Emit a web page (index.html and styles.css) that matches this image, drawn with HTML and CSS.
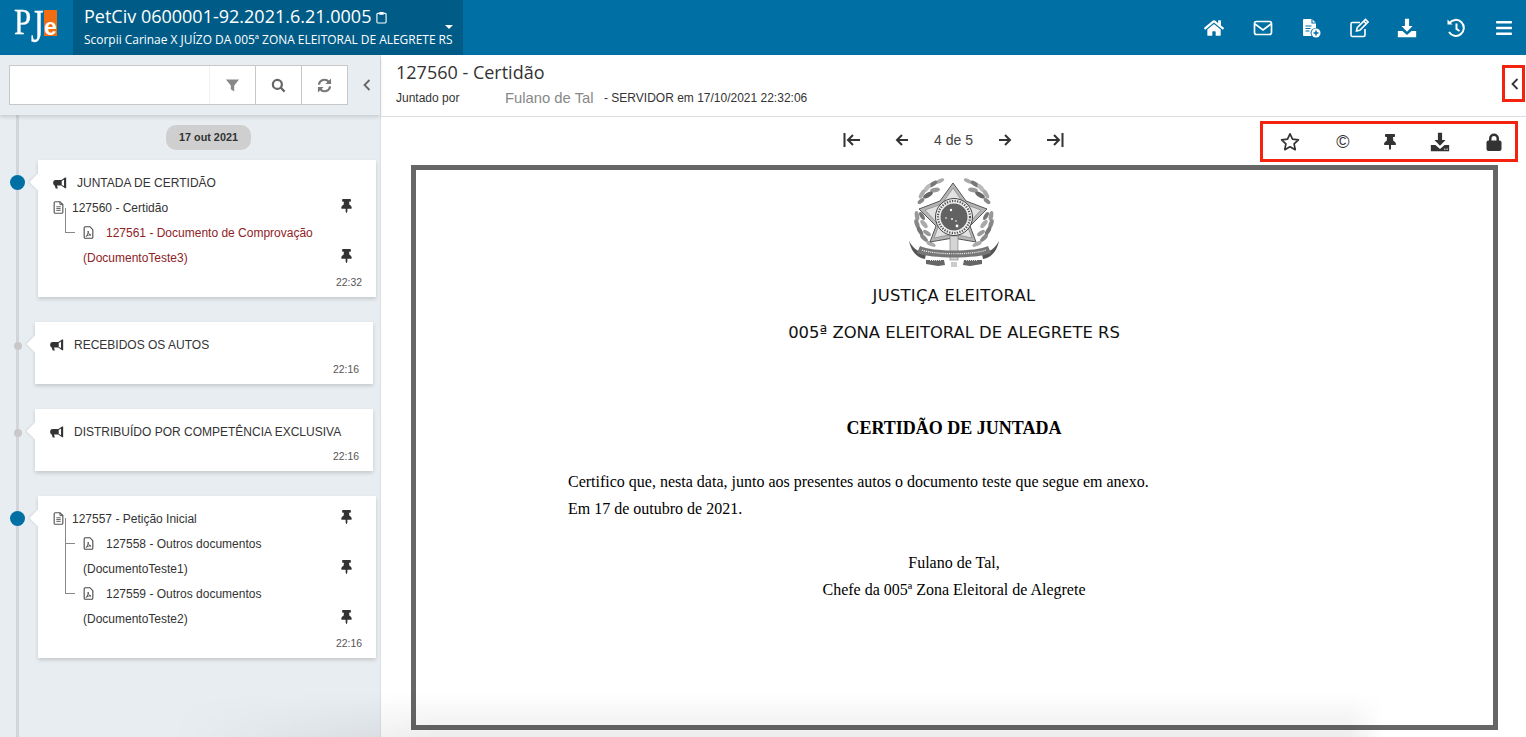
FILE: index.html
```html
<!DOCTYPE html>
<html lang="pt-BR">
<head>
<meta charset="utf-8">
<title>PJe</title>
<link rel="stylesheet" href="styles.css">
</head>
<body>
<svg class="defs" aria-hidden="true">
  <symbol id="i-pin" viewBox="0 0 384 512"><path d="M298 214L286 96h42c13 0 24-11 24-24V24c0-13-11-24-24-24H56C43 0 32 11 32 24v48c0 13 11 24 24 24h42L86 214C37 237 0 277 0 328c0 13 11 24 24 24h136v104c0 1 0 2 1 4l24 48c3 6 11 6 14 0l24-48c1-2 1-3 1-4V352h136c13 0 24-11 24-24 0-51-38-91-86-114z"/></symbol>
  <symbol id="i-down" viewBox="0 0 24 24"><path d="M9.5 1h5v8.5h4.200L12 16.400 5.300 9.500h4.200z"/><path d="M1 15.500h5.500L12 20.500l5.500-5H23V23H1z"/><rect x="17" y="20" width="1.500" height="1.300" fill="#fff"/><rect x="19.800" y="20" width="1.500" height="1.300" fill="#fff"/></symbol>
  <symbol id="i-doc" viewBox="0 0 14 18"><path d="M1 2.500A1.500 1.500 0 0 1 2.500 1H9l4 4v10.500a1.500 1.500 0 0 1-1.500 1.500h-9A1.500 1.500 0 0 1 1 15.500z" fill="none" stroke="currentColor" stroke-width="1.600"/><path d="M4 8h6M4 10.500h6M4 13h6M9 1v4h4" fill="none" stroke="currentColor" stroke-width="1.300"/></symbol>
  <symbol id="i-pdf" viewBox="0 0 14 18"><path d="M1 2.500A1.500 1.500 0 0 1 2.500 1H9l4 4v10.500a1.500 1.500 0 0 1-1.500 1.500h-9A1.500 1.500 0 0 1 1 15.500z" fill="none" stroke="currentColor" stroke-width="1.500"/><path d="M3.500 14.500C5.500 13 7 9.500 6.500 7c0 3 1.500 5 4 5.500-2.500-.3-5 .3-7 2z" fill="none" stroke="currentColor" stroke-width="1.200"/></symbol>
  <symbol id="i-horn" viewBox="0 0 16 14"><path d="M14 0.500h1.200V13H14L9.500 10H4.500L5.500 13.500H3L1.800 10C.6 9.500 0 8.200 0 6.800 0 5 1 3.500 3 3.500h6.500zM12.700 2.800L10 4.600v4.300l2.700 1.800z" fill-rule="evenodd"/></symbol>
</svg>

<div class="app">
  <header class="topbar">
    <div class="logo">
      <span class="logo-p">P</span>
      <span class="logo-j">J</span>
      <span class="logo-e">e</span>
    </div>
    <div class="case">
      <div class="case-num">PetCiv 0600001-92.2021.6.21.0005
        <svg class="clip" viewBox="0 0 12 14"><path d="M3.500 2.500H2A1 1 0 0 0 1 3.500v8.500a1 1 0 0 0 1 1h8a1 1 0 0 0 1-1V3.500a1 1 0 0 0-1-1H8.500" fill="none" stroke="#fff" stroke-width="1.200"/><rect x="3.500" y="1" width="5" height="3" rx=".6" fill="#fff"/></svg>
      </div>
      <div class="case-parts">Scorpii Carinae X JUÍZO DA 005ª ZONA ELEITORAL DE ALEGRETE RS</div>
      <span class="caret"></span>
    </div>
    <nav class="top-actions">
      <svg class="top-ic" viewBox="0 0 576 512" fill="#fff"><path d="M280 148L96 300v164a16 16 0 0 0 16 16l112 0a16 16 0 0 0 16-16v-96a16 16 0 0 1 16-16h64a16 16 0 0 1 16 16v96a16 16 0 0 0 16 16l112 0a16 16 0 0 0 16-16V300L296 148a12 12 0 0 0-16 0zM572 251l-84-69V44a12 12 0 0 0-12-12h-56a12 12 0 0 0-12 12v73L318 43a48 48 0 0 0-61 0L4 251a12 12 0 0 0-1 17l25 31a12 12 0 0 0 17 2l235-194a12 12 0 0 1 16 0l235 194a12 12 0 0 0 17-2l25-31a12 12 0 0 0-1-17z"/></svg>
      <svg class="top-ic" viewBox="0 0 20 20" fill="none" stroke="#fff" stroke-width="1.700"><rect x="1.500" y="3.500" width="17" height="13" rx="2"/><path d="M2 6l8 6 8-6"/></svg>
      <svg class="top-ic" viewBox="0 0 20 20"><path d="M3 1h8l4 4v5a5 5 0 0 0-4.500 8H3a1 1 0 0 1-1-1V2a1 1 0 0 1 1-1z" fill="#fff"/><path d="M11 1v4h4M4.500 8h6M4.500 10.500h5M4.500 13h4" stroke="#006fa3" stroke-width="1.100" fill="none"/><circle cx="15" cy="15" r="4.500" fill="#fff"/><path d="M15 12.500v5M12.500 15h5" stroke="#006fa3" stroke-width="1.500"/></svg>
      <svg class="top-ic" viewBox="0 0 20 20" fill="none" stroke="#fff" stroke-width="1.600"><path d="M16 11v6a1.500 1.500 0 0 1-1.500 1.500h-11A1.500 1.500 0 0 1 2 17V6a1.500 1.500 0 0 1 1.500-1.500H11"/><path d="M7.500 13l.7-3.300L16.500 1.500l2.500 2.500-8.200 8.300zM14.800 3.200l2.500 2.500"/></svg>
      <svg class="top-ic" viewBox="0 0 24 24" fill="#fff"><use href="#i-down"/></svg>
      <svg class="top-ic" viewBox="0 0 20 20" fill="none" stroke="#fff" stroke-width="2"><path d="M3.500 5A8 8 0 1 1 3 14"/><path d="M1.500 1.500v5h5z" fill="#fff" stroke="none"/><path d="M10.500 5.500V11l3 2"/></svg>
      <svg class="top-ic" viewBox="0 0 20 20" fill="#fff"><rect x="2" y="3" width="16" height="2.500" rx=".8"/><rect x="2" y="8.800" width="16" height="2.500" rx=".8"/><rect x="2" y="14.500" width="16" height="2.500" rx=".8"/></svg>
    </nav>
  </header>

  <div class="main">
    <aside class="sidebar">
      <div class="side-top">
        <div class="search">
          <span class="search-field"></span>
          <button class="search-btn"><svg class="ic-14" viewBox="0 0 16 16" fill="#888"><path d="M1 1.500h14L9.800 8v6.500L6.200 12V8z"/></svg></button>
          <button class="search-btn"><svg class="ic-14" viewBox="0 0 16 16" fill="none" stroke="#666" stroke-width="2.400"><circle cx="6.800" cy="6.800" r="4.800"/><path d="M10.200 10.200l4.300 4.300"/></svg></button>
          <button class="search-btn"><svg class="ic-14" viewBox="0 0 16 16" fill="none" stroke="#777" stroke-width="2.300"><path d="M2 7a6 6 0 0 1 10.500-3M14 9A6 6 0 0 1 3.500 12"/><path d="M15 .5v6H9zM1 15.500v-6h6z" fill="#777" stroke="none"/></svg></button>
        </div>
        <svg class="side-chev" viewBox="0 0 8 12" fill="none" stroke="#666" stroke-width="1.800"><path d="M6.500 1L1.500 6l5 5"/></svg>
      </div>

      <div class="timeline">
        <div class="date-pill">17 out 2021</div>

        <article class="card">
          <span class="dot dot-big"></span>
          <div class="row"><svg class="ic-horn"><use href="#i-horn"/></svg><span class="event-text">JUNTADA DE CERTIDÃO</span></div>
          <div class="row"><svg class="ic-doc"><use href="#i-doc"/></svg><span class="doc-text">127560 - Certidão</span><svg class="ic-pin"><use href="#i-pin"/></svg></div>
          <div class="row child last red"><svg class="ic-pdf"><use href="#i-pdf"/></svg><span class="child-text">127561 - Documento de Comprovação</span></div>
          <div class="row sub red"><span>(DocumentoTeste3)</span><svg class="ic-pin"><use href="#i-pin"/></svg></div>
          <div class="time">22:32</div>
        </article>

        <article class="card card-shift">
          <span class="dot"></span>
          <div class="row"><svg class="ic-horn"><use href="#i-horn"/></svg><span class="event-text">RECEBIDOS OS AUTOS</span></div>
          <div class="time">22:16</div>
        </article>

        <article class="card card-shift">
          <span class="dot"></span>
          <div class="row"><svg class="ic-horn"><use href="#i-horn"/></svg><span class="event-text">DISTRIBUÍDO POR COMPETÊNCIA EXCLUSIVA</span></div>
          <div class="time">22:16</div>
        </article>

        <article class="card">
          <span class="dot dot-big"></span>
          <div class="row"><svg class="ic-doc"><use href="#i-doc"/></svg><span class="doc-text">127557 - Petição Inicial</span><svg class="ic-pin"><use href="#i-pin"/></svg></div>
          <div class="row child"><svg class="ic-pdf"><use href="#i-pdf"/></svg><span class="child-text">127558 - Outros documentos</span></div>
          <div class="row sub trunk"><span>(DocumentoTeste1)</span><svg class="ic-pin"><use href="#i-pin"/></svg></div>
          <div class="row child last"><svg class="ic-pdf"><use href="#i-pdf"/></svg><span class="child-text">127559 - Outros documentos</span></div>
          <div class="row sub"><span>(DocumentoTeste2)</span><svg class="ic-pin"><use href="#i-pin"/></svg></div>
          <div class="time">22:16</div>
        </article>
      </div>
    </aside>

    <section class="viewer">
      <div class="viewer-head">
        <div class="viewer-info">
          <h1 class="viewer-title">127560 - Certidão</h1>
          <div class="viewer-meta"><span class="meta-label">Juntado por</span><span class="meta-name">Fulano de Tal</span><span>- SERVIDOR em 17/10/2021 22:32:06</span></div>
        </div>
        <div class="frame-chev">
          <svg class="chev-ic" viewBox="0 0 8 12" fill="none" stroke="#333" stroke-width="1.800"><path d="M6.500 1L1.500 6l5 5"/></svg>
        </div>
      </div>

      <div class="toolbar">
        <div></div>
        <div class="pager">
          <svg class="nav-ic" viewBox="0 0 18 14" fill="none" stroke="#333" stroke-width="2"><path d="M1.500 0v14M17 7H5M10 2L5 7l5 5"/></svg>
          <svg class="nav-ic" viewBox="0 0 18 14" fill="none" stroke="#333" stroke-width="2"><path d="M15 7H4M9 2L4 7l5 5"/></svg>
          <span class="pager-text">4 de 5</span>
          <svg class="nav-ic" viewBox="0 0 18 14" fill="none" stroke="#333" stroke-width="2"><path d="M3 7h11M9 2l5 5-5 5"/></svg>
          <svg class="nav-ic" viewBox="0 0 18 14" fill="none" stroke="#333" stroke-width="2"><path d="M16.500 0v14M1 7h12M8 2l5 5-5 5"/></svg>
        </div>
        <div class="frame-tools">
          <svg class="tool-ic" viewBox="0 0 20 20" fill="none" stroke="#333" stroke-width="1.700"><path d="M10 1.800l2.500 5.400 5.900.7-4.300 4 1.100 5.800L10 14.800l-5.200 2.900 1.100-5.800-4.300-4 5.900-.7z" stroke-linejoin="round"/></svg>
          <span class="copy">©</span>
          <svg class="tool-ic pin-tool" fill="#333"><use href="#i-pin"/></svg>
          <svg class="tool-ic" viewBox="0 0 24 24" fill="#333"><use href="#i-down"/></svg>
          <svg class="tool-ic" viewBox="0 0 20 20" fill="#333"><path d="M5 9V6.500a5 5 0 0 1 10 0V9h-2.500V6.500a2.500 2.500 0 0 0-5 0V9z"/><rect x="2.500" y="8.500" width="15" height="10.500" rx="2"/></svg>
        </div>
      </div>

      <div class="doc-frame">
        <svg class="emblem" viewBox="0 0 104 98">
          <defs>
            <filter id="soft"><feGaussianBlur stdDeviation=".45"/></filter>
            <g id="wreath">
              <ellipse cx="38" cy="7" rx="4.500" ry="2" transform="rotate(-25 38 7)" fill="#aaa"/>
              <ellipse cx="31" cy="10" rx="5" ry="2.200" transform="rotate(-35 31 10)" fill="#777"/>
              <ellipse cx="33" cy="16" rx="5" ry="2.200" transform="rotate(-10 33 16)" fill="#999"/>
              <ellipse cx="25" cy="14" rx="5" ry="2.200" transform="rotate(-50 25 14)" fill="#bbb"/>
              <ellipse cx="26" cy="21" rx="5.500" ry="2.400" transform="rotate(-30 26 21)" fill="#666"/>
              <ellipse cx="20" cy="20" rx="5" ry="2.200" transform="rotate(-60 20 20)" fill="#aaa"/>
              <ellipse cx="19" cy="27" rx="4" ry="2" transform="rotate(-40 19 27)" fill="#888"/>
              <ellipse cx="15" cy="42" rx="5" ry="2.200" transform="rotate(80 15 42)" fill="#999"/>
              <ellipse cx="20" cy="42" rx="4.500" ry="2" transform="rotate(60 20 42)" fill="#777"/>
              <ellipse cx="15" cy="50" rx="5" ry="2.200" transform="rotate(70 15 50)" fill="#888"/>
              <ellipse cx="22" cy="50" rx="5" ry="2.200" transform="rotate(50 22 50)" fill="#aaa"/>
              <ellipse cx="18" cy="57" rx="5" ry="2.200" transform="rotate(60 18 57)" fill="#777"/>
              <ellipse cx="25" cy="59" rx="4.500" ry="2" transform="rotate(35 25 59)" fill="#999"/>
              <ellipse cx="22" cy="64" rx="5" ry="2.200" transform="rotate(45 22 64)" fill="#888"/>
              <ellipse cx="29" cy="70" rx="5" ry="2" transform="rotate(25 29 70)" fill="#aaa"/>
              <path d="M7 67c4 7 9 11 17 13l-1 5C15 84 9 77 7 67z" fill="#555"/>
              <path d="M24 86h18l1 5-7 1-12-2z" fill="#666"/>
            </g>
          </defs>
          <g filter="url(#soft)">
            <use href="#wreath"/>
            <use href="#wreath" transform="translate(104 0) scale(-1 1)"/>
            <polygon points="51,9 64,27 85,35 68,52 74,68 51,64 28,68 34,52 17,35 38,27" fill="#b5b5b5" stroke="#555" stroke-width="1"/>
            <polygon points="51,14 62,30 79,36 65,51 70,64 51,60 32,64 37,51 23,36 40,30" fill="#e2e2e2" stroke="#777" stroke-width=".6"/>
            <rect x="48" y="62" width="8" height="24" fill="#d5d5d5" stroke="#777" stroke-width=".6"/>
            <circle cx="52" cy="43" r="18.500" fill="#f0f0f0" stroke="#444" stroke-width="1"/>
            <circle cx="52" cy="43" r="16" fill="none" stroke="#555" stroke-width="2.200" stroke-dasharray="1.300 1.300"/>
            <circle cx="52" cy="43" r="13.500" fill="#626262"/>
            <g fill="#fff"><circle cx="49" cy="36" r="1.200"/><circle cx="44" cy="44" r=".8"/><circle cx="50" cy="45" r=".9"/><circle cx="54" cy="47" r=".8"/><circle cx="55" cy="52" r="1.400"/></g>
            <path d="M18 72c12 6 56 6 68 0l3 7c-14 6-60 6-74 0z" fill="#777"/>
            <path d="M20 76c14 5 50 5 64 0" stroke="#eee" stroke-width="1.200" stroke-dasharray="1.200 .9" fill="none"/>
            <path d="M28 86.500h12M64 86.500h12" stroke="#ddd" stroke-width="1" stroke-dasharray="1 1" fill="none"/>
            <rect x="49" y="88" width="6" height="5" fill="#ccc"/>
          </g>
        </svg>
        <p class="org">JUSTIÇA ELEITORAL</p>
        <p class="org org-zone">005ª ZONA ELEITORAL DE ALEGRETE RS</p>
        <h2 class="doc-title">CERTIDÃO DE JUNTADA</h2>
        <div class="doc-body">
          <p>Certifico que, nesta data, junto aos presentes autos o documento teste que segue em anexo.</p>
          <p>Em 17 de outubro de 2021.</p>
        </div>
        <div class="doc-sign">
          <p>Fulano de Tal,</p>
          <p>Chefe da 005ª Zona Eleitoral de Alegrete</p>
        </div>
      </div>
    </section>
  </div>
  <div class="bottom-fade"></div>
</div>
</body>
</html>
```

FILE: styles.css
```css
* { box-sizing: border-box; }
html, body { height: 100%; }
body {
  margin: 0;
  font-family: "Liberation Sans", Arial, sans-serif;
  font-size: 12px;
  color: #333;
  background: #fff;
  overflow: hidden;
}
.defs { display: none; }
.app { position: relative; height: 100vh; display: flex; flex-direction: column; overflow: hidden; }

/* header */
.topbar { height: 55px; flex: none; display: flex; background: #006fa3; color: #fff; font-family: "Open Sans", sans-serif; }
.logo { width: 73px; position: relative; flex: none; }
.logo-p, .logo-j { position: absolute; font: 36px/41px "Liberation Serif", serif; color: #fff; transform-origin: 0 0; -webkit-text-stroke: .3px #fff; }
.logo-p { left: 14px; top: 2px; transform: scaleX(.86); }
.logo-j { left: 31px; top: 0; transform: scale(.9, 1.3); }
.logo-e {
  position: absolute; left: 44px; top: 10px; width: 13px; height: 26px; padding-top: 8px;
  background: #f26c12; color: #fff; text-align: center;
  font: bold 23px/18px "Liberation Sans", sans-serif;
}
.case { width: 390px; flex: none; background: #005c87; padding: 5px 0 0 11px; position: relative; }
.case-num { font-size: 18px; line-height: 22px; white-space: nowrap; display: flex; align-items: center; gap: 5px; }
.clip { width: 11px; height: 13px; margin-top: 2px; }
.case-parts { font-size: 11.950px; line-height: 17px; margin-top: 4px; white-space: nowrap; }
.caret { position: absolute; left: 372px; top: 25px; border: 4px solid transparent; border-top-color: #fff; border-bottom: 0; }
.top-actions { margin-left: auto; display: flex; align-items: center; gap: 28.300px; padding-right: 12px; }
.top-ic { width: 20px; height: 20px; display: block; }

/* layout */
.main { flex: 1; display: flex; min-height: 0; }
.sidebar { width: 381px; flex: none; background: #e8edf1; border-right: 1px solid #dcdfe2; display: flex; flex-direction: column; min-height: 0; }
.side-top { height: 60px; flex: none; display: flex; align-items: center; padding: 0 0 0 9px; box-shadow: 0 2px 4px rgba(0,0,0,.14); position: relative; }
.search { width: 339px; height: 40px; display: flex; background: #fff; border: 1px solid #c8c8c8; }
.search-field { flex: 1; border-right: 1px solid #f0f0f0; }
.search-btn { width: 46px; background: #fff; border: 0; border-left: 1px solid #c8c8c8; padding: 0; display: flex; align-items: center; justify-content: center; }
.search-btn:first-of-type { border-left: 0; width: 45px; }
.ic-14 { width: 15px; height: 15px; }
.side-chev { width: 8px; height: 12px; margin-left: 15px; }

/* timeline */
.timeline { flex: 1; margin-left: 16px; border-left: 3px solid #d2d6da; padding: 10px 0 0 19px; display: flex; flex-direction: column; align-items: flex-start; gap: 25px; }
.date-pill { margin: 0 0 -15px 128px; width: 85px; height: 25px; border-radius: 10px; background: #cfcfcf; font-weight: bold; font-size: 10.800px; line-height: 25px; text-align: center; color: #333; }
.card { position: relative; width: 338px; background: #fff; padding: 10px 14px 7px 15px; box-shadow: 0 2px 4px rgba(0,0,0,.16); }
.card::before { content: ""; position: absolute; left: -6px; top: 16px; width: 12px; height: 12px; background: #fff; transform: rotate(45deg); box-shadow: -2px 2px 2px -1px rgba(0,0,0,.08); clip-path: polygon(-30% 130%, -30% -30%, 100% 100%, 50% 130%); }
.card-shift { margin-left: -3px; }
.dot { position: absolute; left: -21px; top: 20px; width: 8px; height: 8px; border-radius: 50%; background: #c8c8c8; }
.dot-big { left: -28px; top: 15px; width: 15px; height: 15px; background: #006fa3; }
.row { position: relative; height: 25px; display: flex; align-items: center; color: #333; }
.ic-horn { width: 14px; height: 12px; fill: #333; flex: none; }
.ic-doc { width: 11px; height: 13px; color: #555; flex: none; }
.ic-pdf { width: 11px; height: 13px; color: #444; flex: none; }
.ic-pin { width: 11px; height: 14px; fill: #333; margin-left: auto; margin-right: 10px; margin-top: -3px; flex: none; }
.event-text { margin-left: 10px; }
.doc-text { margin-left: 8px; }
.child { padding-left: 30px; }
.child-text { margin-left: 12px; }
.child::before { content: ""; position: absolute; left: 12px; top: -13px; width: 9px; height: 25px; border-left: 1px solid #888; border-bottom: 1px solid #888; }
.child.last::before { top: -12px; height: 24px; }
.sub { padding-left: 30px; }
.trunk::before { content: ""; position: absolute; left: 12px; top: -13px; bottom: 0; border-left: 1px solid #888; }
.red { color: #8e2226; }
.time { height: 15px; margin-top: 5px; text-align: right; font-size: 10.400px; line-height: 15px; color: #555; }

/* viewer */
.viewer { flex: 1; min-width: 0; display: flex; flex-direction: column; }
.viewer-head { height: 62px; flex: none; display: flex; justify-content: space-between; border-bottom: 1px solid #dcdfe2; padding-left: 15px; }
.viewer-title { margin: 5px 0 0; font: 400 18px/24px "Open Sans", sans-serif; color: #333; }
.viewer-meta { margin-top: 6px; line-height: 16px; display: flex; align-items: center; }
.meta-label { width: 109px; }
.meta-name { width: 99px; font-size: 14.800px; color: #888; }
.frame-chev { width: 23px; height: 37px; margin: 10px 1px 0 0; border: 3px solid #f4230f; display: flex; align-items: center; justify-content: center; padding-left: 3px; }
.chev-ic { width: 8px; height: 12px; flex: none; }

.toolbar { height: 48px; flex: none; display: grid; grid-template-columns: 1fr auto 1fr; align-items: start; }
.pager { display: flex; align-items: center; height: 45px; }
.nav-ic { width: 18px; height: 14px; margin-top: 0; }
.nav-ic:first-child { margin-right: 32px; }
.nav-ic:nth-child(2) { margin-right: 23px; }
.nav-ic:nth-child(4) { margin-left: 23px; margin-right: 32px; }
.pager-text { font-size: 14px; line-height: 16px; color: #444; }
.frame-tools { justify-self: end; margin: 4px 8px 0 0; width: 258px; height: 41px; border: 3px solid #f4230f; display: flex; align-items: center; justify-content: space-between; padding: 0 11px 0 17px; }
.tool-ic { width: 20px; height: 20px; display: block; }
.pin-tool { width: 12px; height: 16px; }
.copy { font-size: 18px; line-height: 20px; color: #333; margin-left: 2px; }

.doc-frame { flex: 1; margin: 0 28px 7px 30px; border: 5px solid #666; background: #fff; min-height: 0; text-align: center; color: #000; font-family: "Liberation Serif", serif; padding: 4px 1px 0 0; }
.emblem { display: block; width: 104px; height: 98px; margin: 0 auto; }
.org { margin: 0; font: 16.400px/37px "DejaVu Sans", Verdana, sans-serif; color: #111; }
.org:first-of-type { margin-top: 5px; letter-spacing: .25px; }
.doc-title { margin: 64px 0 0; font: bold 18px/27px "Liberation Serif", serif; }
.doc-body { margin: 26px 0 0 152px; text-align: left; font-size: 16px; line-height: 27px; }
.doc-body p, .doc-sign p { margin: 0; }
.doc-sign { margin-top: 27px; font-size: 16px; line-height: 27px; }

.bottom-fade {
  position: absolute; left: 170px; bottom: 0; width: 1215px; height: 44px; pointer-events: none;
  background: linear-gradient(to bottom, rgba(0,0,0,0), rgba(0,0,0,.07));
  -webkit-mask-image: linear-gradient(to right, transparent, #000 22%, #000 97%, transparent);
  mask-image: linear-gradient(to right, transparent, #000 22%, #000 97%, transparent);
}
```
